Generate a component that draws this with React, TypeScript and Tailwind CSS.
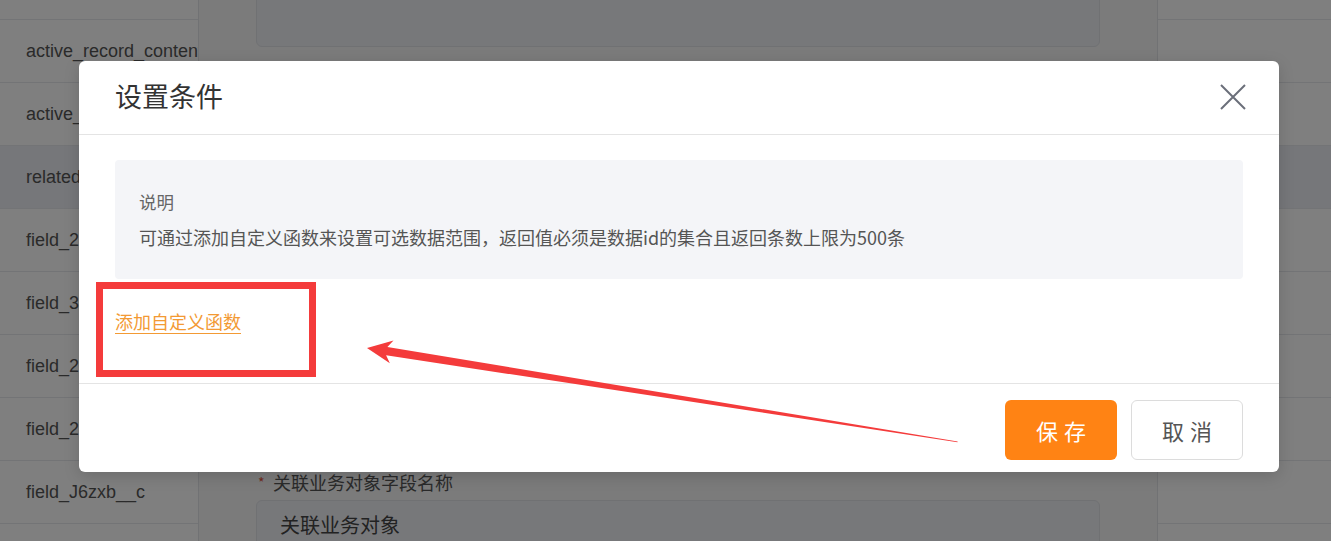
import React from 'react';

const leftRows = [
  'active_record_type',
  'active_record_content',
  'active_record_status',
  'related_object_data',
  'field_2x8Pk__c',
  'field_3nQ1a__c',
  'field_2b7Ld__c',
  'field_2Vt9e__c',
  'field_J6zxb__c',
];

const CJK = "font-['Noto_Sans_CJK_SC','Noto_Sans',sans-serif]";

const Row: React.FC<{ label?: string; selected?: boolean }> = ({ label, selected }) => (
  <div
    className={`h-[63px] shrink-0 border-b border-[#e6e8ec] flex items-center pl-[26px] whitespace-nowrap overflow-hidden ${
      selected ? 'bg-[#eceef4]' : 'bg-white'
    }`}
  >
    {label && <span className="text-[18px] text-[#555] font-['Liberation_Sans',Arial,sans-serif]">{label}</span>}
  </div>
);

const Page: React.FC = () => (
  <div className="flex h-full">
    {/* table column */}
    <div className="w-[198px] shrink-0 flex flex-col -mt-[43px] overflow-hidden">
      {leftRows.map((r, i) => (
        <Row key={r} label={r} selected={i === 3} />
      ))}
    </div>

    {/* side form panel */}
    <div className="w-[960px] shrink-0 bg-[#f6f6f7] border-x border-[#e2e4e8] flex flex-col justify-between px-[57px]">
      <div className="-mt-[40px] h-[87px] rounded-[6px] bg-[#eef0f4] border border-[#e0e2e7]" />
      <div className={CJK}>
        <div className="flex items-center h-[24px] mb-[6px]">
          <span className="text-[#e0553b] text-[14px] w-[17px] pl-[2px]">*</span>
          <span className="text-[18px] text-[#555]">关联业务对象字段名称</span>
        </div>
        <div className="h-[52px] -mb-[11px] rounded-t-[6px] bg-[#eef0f4] border border-[#e0e2e7] flex items-center pl-[23px] pb-[3px]">
          <span className="text-[20px] text-[#444]">关联业务对象</span>
        </div>
      </div>
    </div>

    {/* right column */}
    <div className="flex-1 flex flex-col -mt-[43px] overflow-hidden">
      {leftRows.map((r, i) => (
        <Row key={r} selected={i === 3} />
      ))}
    </div>
  </div>
);

const Annotation: React.FC = () => (
  <>
    <div className="absolute left-[96px] top-[282px] w-[220px] h-[95px] border-[7px] border-[#f43b3b] pointer-events-none" />
    <svg className="absolute inset-0 pointer-events-none" width="1331" height="541" viewBox="0 0 1331 541">
      <g transform="translate(367 348) rotate(9.04)">
        <polygon
          points="0,0 25,-11.5 20,-4.2 598,-0.4 598,0.4 20,4.2 25,11.5"
          fill="#f43b3b"
        />
      </g>
    </svg>
  </>
);

const Modal: React.FC = () => (
  <div className={`absolute left-[79px] top-[61px] w-[1200px] h-[411px] bg-white rounded-[6px] shadow-[0_4px_16px_rgba(0,0,0,0.15)] flex flex-col ${CJK}`}>
    <div className="h-[74px] shrink-0 border-b border-[#e4e4e4] flex items-center justify-between pl-[36px] pr-[33px]">
      <h2 className="text-[27px] text-[#333] leading-none -mt-[5px]">设置条件</h2>
      <svg width="26" height="26" viewBox="0 0 26 26" className="-mt-[2px]">
        <path d="M1 1 L25 25 M25 1 L1 25" stroke="#6b6f7a" strokeWidth="2" fill="none" />
      </svg>
    </div>

    <div className="flex-1 px-[36px] pt-[25px]">
      <div className="h-[119px] rounded-[4px] bg-[#f4f5f8] px-[24px] pt-[28px]">
        <p className="text-[17.5px] leading-[28px] text-[#666]">说明</p>
        <p className="mt-[7px] text-[18px] leading-[28px] text-[#555]">
          可通过添加自定义函数来设置可选数据范围，返回值必须是数据id的集合且返回条数上限为500条
        </p>
      </div>
      <div className="mt-[30px]">
        <span className="inline-block text-[18px] leading-[24px] text-[#f39a34] border-b border-[#f39a34]">
          添加自定义函数
        </span>
      </div>
    </div>

    <div className="h-[89px] shrink-0 border-t border-[#e4e4e4] flex items-start justify-end gap-[14px] pt-[16px] pr-[36px]">
      <button className="w-[112px] h-[60px] rounded-[6px] bg-[#ff8314] text-white text-[22px] tracking-[6px] pl-[6px]">
        保存
      </button>
      <button className="w-[112px] h-[60px] rounded-[6px] bg-white border border-[#dcdcdc] text-[#555] text-[22px] tracking-[6px] pl-[6px]">
        取消
      </button>
    </div>
  </div>
);

export default function App() {
  return (
    <div className="relative w-[1331px] h-[541px] overflow-hidden bg-white">
      <Page />
      <div className="absolute inset-0 bg-black/50" />
      <Modal />
      <Annotation />
    </div>
  );
}
